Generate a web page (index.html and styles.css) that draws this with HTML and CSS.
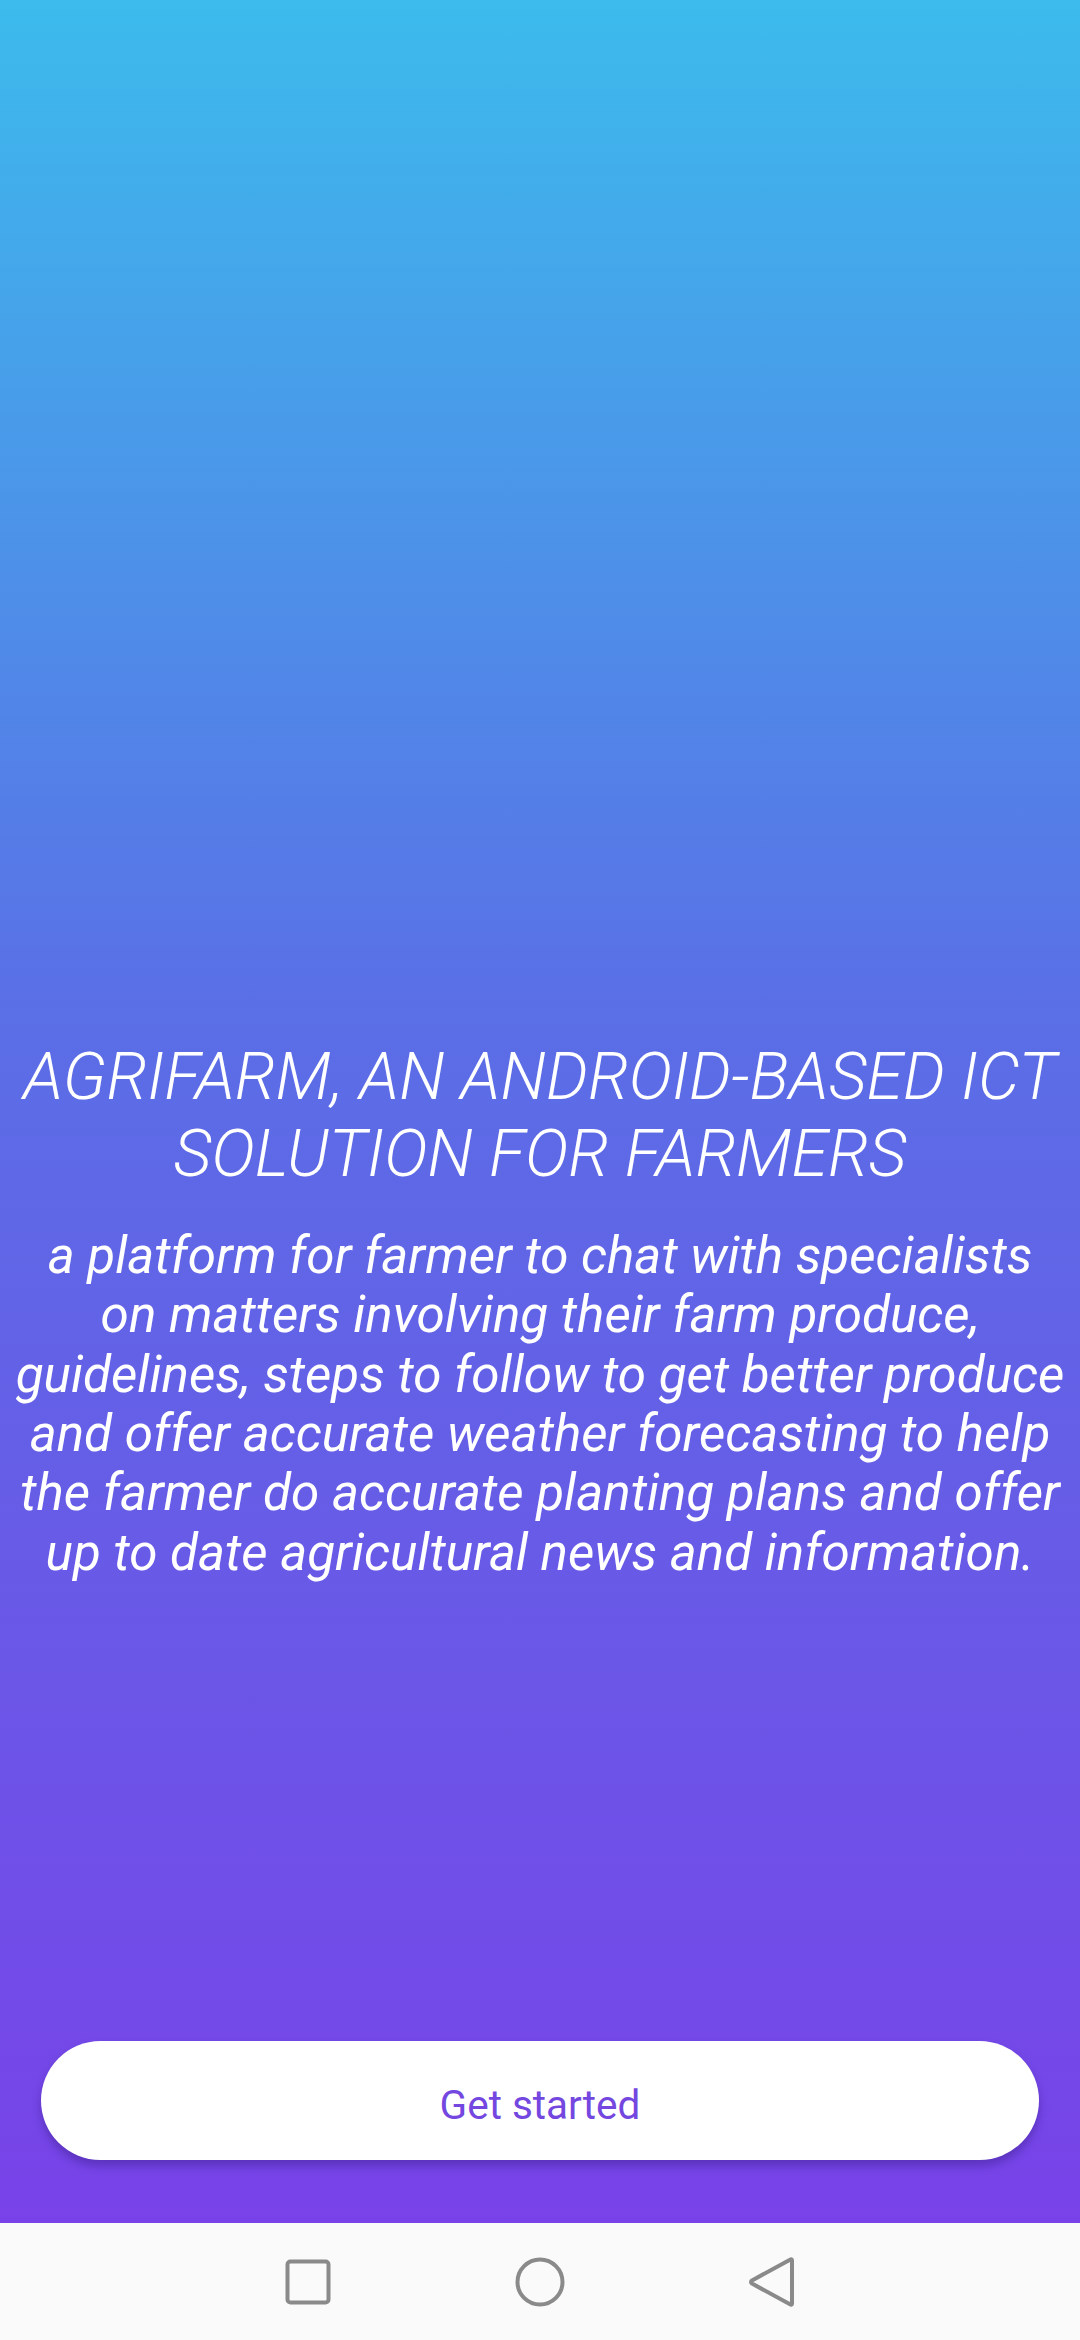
FILE: index.html
```html
<!DOCTYPE html>
<html lang="en">
<head>
<meta charset="utf-8">
<title>AgriFarm</title>
<link rel="stylesheet" href="styles.css">
</head>
<body>
<div class="screen">
  <main class="hero">
    <section class="intro">
      <h1 class="title">AGRIFARM, AN ANDROID-BASED ICT<br>SOLUTION FOR FARMERS</h1>
      <p class="desc">a platform for farmer to chat with specialists<br>on matters involving their farm produce,<br>guidelines, steps to follow to get better produce<br>and offer accurate weather forecasting to help<br>the farmer do accurate planting plans and offer<br>up to date agricultural news and information.</p>
    </section>
    <button class="start">Get started</button>
  </main>
  <nav class="navbar">
    <svg class="nav-icon" width="48" height="48" viewBox="0 0 48 48"><rect x="3.5" y="3.5" width="41" height="41" rx="3" fill="none" stroke="#8a8a8a" stroke-width="4"/></svg>
    <svg class="nav-icon" width="52" height="52" viewBox="0 0 52 52"><circle cx="26" cy="26" r="22.5" fill="none" stroke="#8a8a8a" stroke-width="4"/></svg>
    <svg class="nav-icon" width="48" height="52" viewBox="0 0 48 52"><path d="M44 4.5 L44 47.5 Q44 49.5 42 48.3 L4 27.6 Q2 26 4 24.4 L42 3.7 Q44 2.5 44 4.5 Z" fill="none" stroke="#8a8a8a" stroke-width="4" stroke-linejoin="round"/></svg>
  </nav>
</div>
</body>
</html>
```

FILE: styles.css
```css
html, body {
  margin: 0;
  padding: 0;
}
body {
  width: 1080px;
  height: 2340px;
  font-family: Roboto, "Noto Sans", sans-serif;
  overflow: hidden;
}
.screen {
  display: flex;
  flex-direction: column;
  height: 2340px;
}
.hero {
  height: 2223px;
  display: flex;
  flex-direction: column;
  background: linear-gradient(180deg, #3cbbec 0%, #5a6fe6 45%, #7842e8 100%);
  box-sizing: border-box;
  padding-top: 1038px;
  padding-bottom: 63px;
}
.intro {
  display: flex;
  flex-direction: column;
  align-items: center;
  color: #ffffff;
  text-align: center;
}
.title {
  margin: 0;
  font-size: 66px;
  font-weight: 300;
  font-style: italic;
  line-height: 77.4px;
  white-space: nowrap;
}
.desc {
  margin: 33px 0 0;
  font-size: 51.2px;
  font-weight: 400;
  font-style: italic;
  line-height: 59.4px;
  white-space: nowrap;
}
.start {
  margin: auto 41px 0 41px;
  height: 119px;
  padding: 8px 0 0;
  border: none;
  border-radius: 60px;
  background: #ffffff;
  color: #7447e0;
  font-family: Roboto, sans-serif;
  font-size: 40.5px;
  font-weight: 400;
  box-shadow: 0 6px 8px rgba(40, 20, 110, 0.35);
}
.navbar {
  flex: 1;
  background: #fafafa;
  display: flex;
  align-items: center;
  justify-content: center;
  gap: 182px;
}
.nav-icon {
  display: block;
}
```
